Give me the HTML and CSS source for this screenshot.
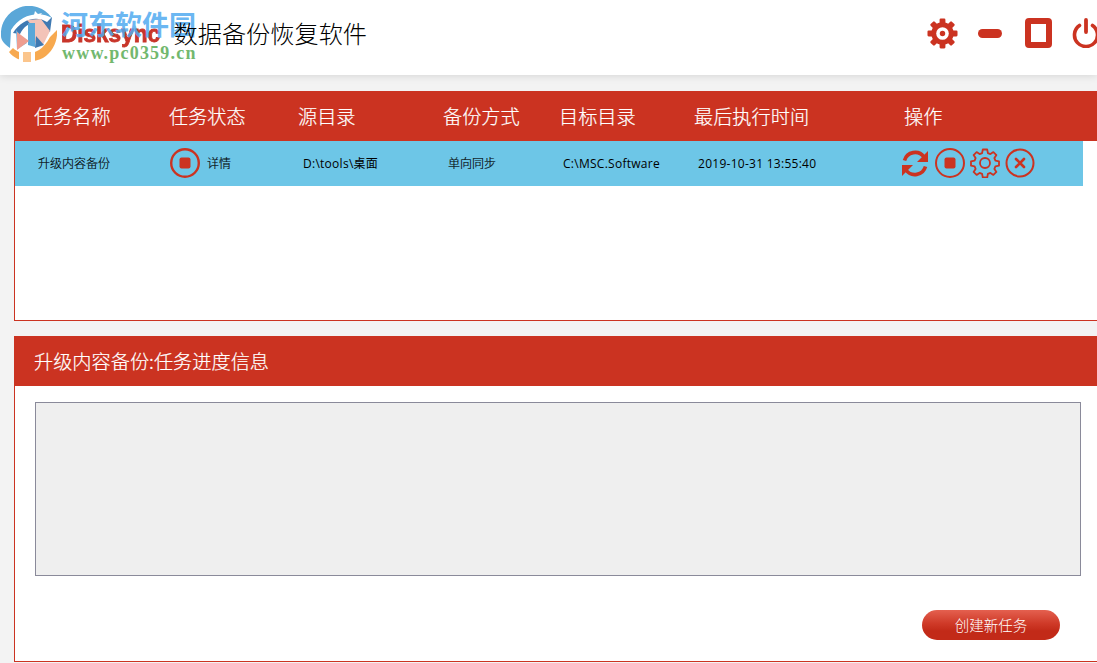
FILE: index.html
```html
<!DOCTYPE html>
<html lang="zh">
<head>
<meta charset="utf-8">
<title>Disksync</title>
<link rel="stylesheet" href="styles.css">
</head>
<body>
<header class="topbar">
  <div class="brand">
    <svg class="wm-logo" viewBox="0 0 56 56" aria-hidden="true">
      <circle cx="28" cy="28" r="27" fill="#fff"/>
      <path d="M0 30A28 28 0 0 1 51 12C40 5 20 7 10 24L9 42C3 38 0 34 0 30z" fill="#5aa7d8"/>
      <path d="M34 5l3 3 4-1-3 4 1 4-4-3-4 1 2-4z" fill="#fff"/>
      <path d="M12 27C20 13 36 9 46 16L51 11 49 26 36 23 42 19C33 14 24 18 19 28z" fill="#3f79b2"/>
      <path d="M26 14l14-1 9 12-7 14-9-3V22z" fill="#f3c3b8"/>
      <path d="M15 24l11 13-10 6z" fill="#6eb2dd"/>
      <path d="M27 17h7v24l-7-2z" fill="#5aa7d8"/>
      <path d="M16 26l12 9-12 9z" fill="#ef9d8f"/>
      <path d="M35 30l8 9-9 3z" fill="#3f79b2"/>
      <path d="M12 42C20 50 38 52 49 31L56 24C57 34 52 46 42 52 28 59 14 54 8 46z" fill="#f7a94f"/>
      <path d="M18 44h4v12h-4zM30 46h4v10h-4z" fill="#fff"/>
      <path d="M22 46h8v10h-8z" fill="#fbc58c"/>
    </svg>
    <span class="app-logo">Disksync</span>
    <span class="wm-cn">河东软件园</span>
    <span class="wm-url">www.pc0359.cn</span>
    <h1 class="app-title">数据备份恢复软件</h1>
  </div>
  <div class="win-controls">
    <svg class="ic-gear" viewBox="0 0 32 32" aria-hidden="true">
      <g fill="#cb3321">
        <rect x="13" y="0.500" width="6" height="31" rx="1.200"/>
        <rect x="13" y="0.500" width="6" height="31" rx="1.200" transform="rotate(45 16 16)"/>
        <rect x="13" y="0.500" width="6" height="31" rx="1.200" transform="rotate(90 16 16)"/>
        <rect x="13" y="0.500" width="6" height="31" rx="1.200" transform="rotate(135 16 16)"/>
        <circle cx="16" cy="16" r="11.500"/>
      </g>
      <circle cx="16" cy="16" r="6.500" fill="#fff"/>
      <circle cx="16" cy="16" r="2.800" fill="#cb3321"/>
    </svg>
    <span class="ic-min"></span>
    <span class="ic-max"></span>
    <svg class="ic-power" viewBox="0 0 28 30" aria-hidden="true"><path fill="none" stroke="#cb3321" stroke-width="3.600" stroke-linecap="round" d="M7.500 7.500a11.500 11.500 0 1 0 13 0"/><path fill="none" stroke="#cb3321" stroke-width="3.800" stroke-linecap="round" d="M14 2v12"/></svg>
  </div>
</header>

<section class="panel tasks">
  <div class="table-head">
    <span>任务名称</span><span>任务状态</span><span>源目录</span><span>备份方式</span><span>目标目录</span><span>最后执行时间</span><span>操作</span>
  </div>
  <div class="table-row">
    <span class="cell-cn">升级内容备份</span>
    <span class="status">
      <svg class="ic-stop" viewBox="0 0 30 30" aria-hidden="true"><circle cx="15" cy="15" r="13.800" fill="none" stroke="#cb3321" stroke-width="2.400"/><rect x="9.500" y="9.500" width="11" height="11" rx="2" fill="#cb3321"/></svg>
      <span class="cell-cn">详情</span>
    </span>
    <span class="cell-latin">D:\tools\桌面</span>
    <span class="cell-cn">单向同步</span>
    <span class="cell-latin">C:\MSC.Software</span>
    <span class="cell-latin">2019-10-31 13:55:40</span>
    <span class="ops">
      <svg class="ic-op" viewBox="0 0 30 30" aria-hidden="true"><path fill="none" stroke="#cb3321" stroke-width="3.600" d="M4.500 12.500A11 11 0 0 1 24 9"/><path fill="#cb3321" d="M28 3v11H17z"/><path fill="none" stroke="#cb3321" stroke-width="3.600" d="M25.500 18.500A11 11 0 0 1 6 22"/><path fill="#cb3321" d="M2 28V17h11z"/></svg>
      <svg class="ic-op" viewBox="0 0 30 30" aria-hidden="true"><circle cx="15" cy="15" r="14" fill="none" stroke="#cb3321" stroke-width="2"/><rect x="9.500" y="9.500" width="11" height="11" rx="2" fill="#cb3321"/></svg>
      <svg class="ic-op" viewBox="0 0 30 30" aria-hidden="true"><path fill="none" stroke="#cb3321" stroke-width="1.800" stroke-linejoin="round" d="M12.800 1.500h4.400l.7 3.600 2.500 1 3-2 3 3-2 3 1 2.500 3.600.7v4.400l-3.600.7-1 2.500 2 3-3 3-3-2-2.500 1-.7 3.600h-4.400l-.7-3.600-2.500-1-3 2-3-3 2-3-1-2.500-3.600-.7v-4.400l3.600-.7 1-2.500-2-3 3-3 3 2 2.500-1z"/><circle cx="15" cy="15" r="5" fill="none" stroke="#cb3321" stroke-width="1.800"/></svg>
      <svg class="ic-op" viewBox="0 0 30 30" aria-hidden="true"><circle cx="15" cy="15" r="13.500" fill="none" stroke="#cb3321" stroke-width="2"/><path fill="none" stroke="#cb3321" stroke-width="2.600" stroke-linecap="round" d="M11 11l8 8M19 11l-8 8"/></svg>
    </span>
  </div>
</section>

<section class="panel progress">
  <div class="panel-title">升级内容备份:任务进度信息</div>
  <div class="log"></div>
  <div class="actions"><button class="btn" type="button">创建新任务</button></div>
</section>
</body>
</html>
```
FILE: styles.css
```css
* { box-sizing: border-box; }
html, body { margin: 0; height: 100%; overflow: hidden; }
body {
  width: 1097px;
  height: 663px;
  background: #f3f3f3;
  font-family: "Open Sans", "Noto Sans CJK SC", sans-serif;
  color: #000;
}
.topbar {
  height: 75px;
  background: #fff;
  box-shadow: 0 1px 8px rgba(0,0,0,.12);
  display: flex;
  justify-content: space-between;
  align-items: center;
  position: relative;
}
.brand { position: relative; height: 75px; flex: 1; }
.wm-logo { position: absolute; left: 1px; top: 6px; width: 56px; height: 56px; filter: blur(.4px); }
.app-logo {
  position: absolute; left: 61px; top: 20px;
  display: block;
  font: bold 23px/28px "Liberation Sans", sans-serif;
  color: #c8352a;
  -webkit-text-stroke: .8px #c8352a;
  transform: scaleX(.98);
  transform-origin: left center;
}
.wm-cn {
  position: absolute; left: 61px; top: 9px;
  font: bold 27px/30px "Noto Sans CJK SC", sans-serif;
  color: rgba(80,170,240,.85);
}
.wm-url {
  position: absolute; left: 62px; top: 44px;
  font: bold 18px/18px "Liberation Serif", serif;
  letter-spacing: 1.2px;
  color: #72b86e;
}
.app-title {
  position: absolute; left: 173.5px; top: 15px; margin: 0;
  font-family: "Noto Sans CJK SC", sans-serif;
  font-size: 24.2px; font-weight: 300; line-height: 36px;
}
.win-controls { display: flex; align-items: center; padding-bottom: 9px; margin-right: -3px; }
.ic-gear { width: 31px; height: 31px; margin-right: 20px; }
.ic-min { width: 24px; height: 9px; background: #cb3321; border-radius: 5px; margin-right: 23px; }
.ic-max { width: 27px; height: 30px; border: 6px solid #cb3321; border-radius: 4px; margin-right: 20px; background: #fff; }
.ic-power { width: 28px; height: 30px; }

.panel {
  margin-left: 14px;
  width: 1100px;
  background: #fff;
  border: 1px solid #cb3321;
}
.tasks { margin-top: 16px; height: 230px; }
.progress { margin-top: 15px; height: 326px; }

.table-head, .panel-title {
  margin: -1px -1px 0;
  height: 50px;
  background: #cb3321;
  color: #fff;
  font-family: "Noto Sans CJK SC", sans-serif;
  font-size: 19.2px;
  font-weight: 300;
  -webkit-text-stroke: .2px #fff;
  line-height: 50px;
  padding-left: 20px;
}
.table-head {
  display: grid;
  grid-template-columns: 135px 129px 145px 116px 135px 210px 1fr;
}
.table-row {
  width: 1068px;
  height: 45px;
  background: #6dc6e7;
  display: grid;
  grid-template-columns: 132px 133px 145px 115px 135px 202px 1fr;
  padding: 0 0 1px 23px;
  align-items: center;
  font-size: 12px;
}
.cell-cn { font-weight: 300; -webkit-text-stroke: .15px #000; }
.cell-latin { letter-spacing: .27px; }
.status { display: flex; align-items: center; gap: 7px; }
.ic-stop { width: 30px; height: 30px; display: block; }
.ops { display: flex; align-items: center; gap: 5px; }
.ic-op { width: 30px; height: 30px; display: block; }

.log {
  margin: 16px 0 0 20px;
  width: 1046px;
  height: 174px;
  background: #efefef;
  border: 1px solid #8a8a9a;
}
.actions { margin-top: 34px; padding-left: 907px; }
.btn {
  display: block;
  width: 138px;
  height: 30px;
  padding: 0;
  border: 0;
  border-radius: 15px;
  color: #fff;
  font: 300 14.5px/30px "Noto Sans CJK SC", sans-serif;
  background: linear-gradient(#e4604f 0%, #cf3a28 45%, #c22a18 70%, #c22a18 100%);
}
```
